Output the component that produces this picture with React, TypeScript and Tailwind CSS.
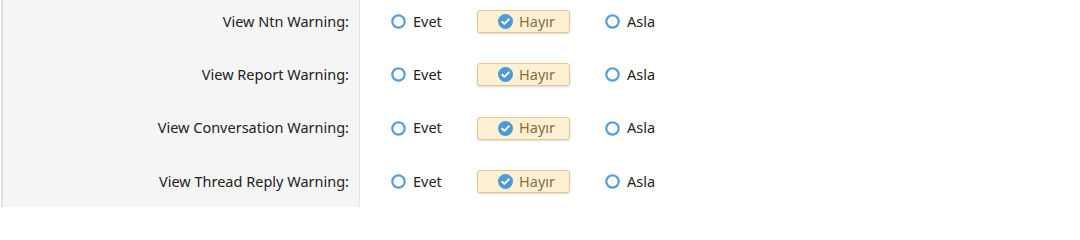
import React from 'react';

const rows = [
  'View Ntn Warning:',
  'View Report Warning:',
  'View Conversation Warning:',
  'View Thread Reply Warning:',
];

function RadioOff() {
  return (
    <svg width="15" height="15" viewBox="0 0 16 16" className="shrink-0">
      <circle cx="8" cy="8" r="6.6" fill="#fff" stroke="#5b9fd6" strokeWidth="2.4" />
    </svg>
  );
}

function RadioOn() {
  return (
    <svg width="15" height="15" viewBox="0 0 16 16" className="shrink-0">
      <circle cx="8" cy="8" r="8" fill="#4d9ad8" />
      <path d="M4.4 8.3l2.4 2.3 4.8-4.9" fill="none" stroke="#fff" strokeWidth="2" strokeLinecap="round" strokeLinejoin="round" />
    </svg>
  );
}

function Options() {
  return (
    <div className="flex items-center pl-[31px] text-[14.5px] text-[#222]">
      <label className="flex w-[86px] items-center gap-[7px]">
        <RadioOff />
        <span>Evet</span>
      </label>
      <label className="flex h-[23px] w-[93px] items-center gap-[6px] rounded-[3px] border border-[#e4c98e] bg-[#fdf0d3] pl-[20px] text-[#8a6d3b] shadow-[0_1px_2px_rgba(0,0,0,0.15)]">
        <RadioOn />
        <span>Hayır</span>
      </label>
      <label className="ml-[35px] flex items-center gap-[7px]">
        <RadioOff />
        <span>Asla</span>
      </label>
    </div>
  );
}

export default function App() {
  return (
    <div className="h-[207px] w-[1080px] overflow-hidden bg-white pl-[1px] font-['Noto_Sans',sans-serif]">
      <div className="-mt-[5px] grid grid-cols-[357px_1fr] auto-rows-[53.33px] border-l-2 border-[#dedede]">
        {rows.map((label) => (
          <React.Fragment key={label}>
            <div className="flex items-center justify-end border-r border-[#e6e6e6] bg-[#f5f5f5] pr-[10px] text-[14.5px] text-[#222]">
              {label}
            </div>
            <Options />
          </React.Fragment>
        ))}
      </div>
    </div>
  );
}
